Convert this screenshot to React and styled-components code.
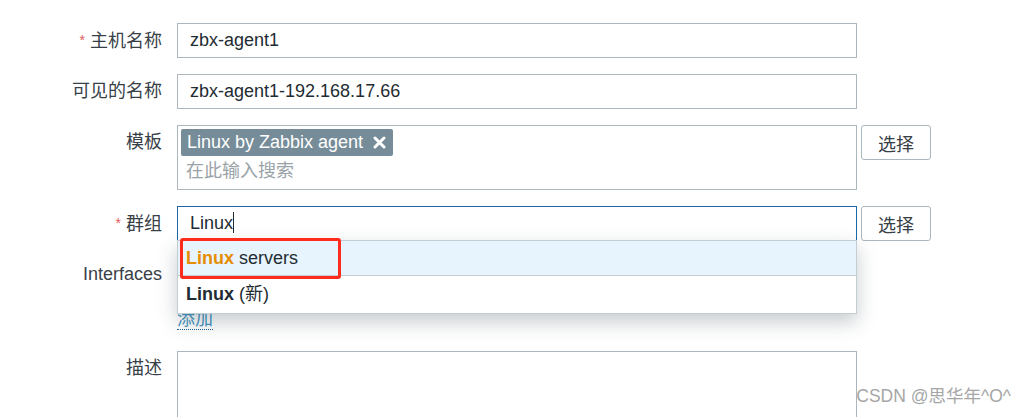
import React from 'react';
import styled, { createGlobalStyle } from 'styled-components';

const GlobalStyle = createGlobalStyle`
    body {
        margin: 0;
        background: #fff;
        font-family: "Liberation Sans", Arial, "Noto Sans CJK SC", sans-serif;
        color: #1f2c33;
    }
`;

const StPage = styled.div`
    position: relative;
    width: 1024px;
    height: 417px;
    overflow: hidden;
    padding-top: 23px;
    box-sizing: border-box;
`;

const StForm = styled.div`
    display: flex;
    flex-direction: column;
    gap: 16px;
`;

const StRow = styled.div`
    display: flex;
    align-items: flex-start;
    margin-top: ${p => p.top || 0}px;
`;

const StLabel = styled.div`
    width: 162px;
    padding-right: 15px;
    height: 35px;
    line-height: 35px;
    text-align: right;
    font-size: 18px;
    color: #384047;
    flex-shrink: 0;
    white-space: nowrap;
`;

const StRequired = styled.span`
    color: #e45959;
    font-size: 14px;
    margin-right: 5px;
    vertical-align: 2px;
`;

const StField = styled.div`
    position: relative;
    width: 680px;
    flex-shrink: 0;
`;

const StInput = styled.div`
    box-sizing: border-box;
    height: 35px;
    border: 1px solid ${p => (p.focused ? '#1d66a8' : '#acb6bd')};
    padding: 0 12px;
    line-height: 33px;
    font-size: 18px;
    color: #1f2c33;
`;

const StCaret = styled.span`
    display: inline-block;
    width: 1px;
    height: 21px;
    background: #1f2c33;
    vertical-align: -4px;
`;

const StMulti = styled.div`
    box-sizing: border-box;
    height: 65px;
    border: 1px solid #acb6bd;
    padding: 3px 3px 0 3px;
`;

const StTag = styled.span`
    display: inline-flex;
    align-items: center;
    height: 27px;
    padding: 0 7px 0 6px;
    background: #768d99;
    border-radius: 2px;
    color: #fff;
    font-size: 18px;
    gap: 10px;
`;

const StPlaceholder = styled.div`
    padding-left: 5px;
    margin-top: 3px;
    font-size: 18px;
    color: #9aa3a8;
    line-height: 24px;
`;

const StButton = styled.button`
    box-sizing: border-box;
    margin-left: 4px;
    width: 70px;
    height: 35px;
    border: 1px solid #acb6bd;
    border-radius: 3px;
    background: #fff;
    font-family: inherit;
    font-size: 18px;
    color: #384047;
    padding: 0;
`;

const StLink = styled.span`
    display: inline-block;
    margin-top: 53px;
    font-size: 18px;
    color: #4796c4;
    border-bottom: 1px dotted #1d66a8;
    line-height: 19px;
`;

const StTextarea = styled.div`
    box-sizing: border-box;
    height: 80px;
    border: 1px solid #acb6bd;
`;

const StDropdown = styled.div`
    position: absolute;
    top: 34px;
    left: 0;
    width: 680px;
    box-sizing: border-box;
    border: 1px solid #c4cdd2;
    background: #fff;
    box-shadow: 0 8px 18px rgba(30, 50, 60, 0.25);
    z-index: 5;
`;

const StOption = styled.div`
    height: ${p => p.h}px;
    line-height: ${p => p.h}px;
    padding-left: 8px;
    font-size: 18px;
    color: #1f2c33;
    background: ${p => (p.active ? '#e8f4fd' : '#fff')};
    border-bottom: ${p => (p.active ? '1px solid #c4cdd2' : 'none')};

    b {
        color: ${p => (p.active ? '#e68c00' : '#1f2c33')};
    }
`;

const StMark = styled.div`
    position: absolute;
    left: 2px;
    top: -3px;
    width: 161px;
    height: 41px;
    box-sizing: border-box;
    border: 3px solid #ff2b1c;
    border-radius: 3px;
`;

const StWatermark = styled.div`
    position: absolute;
    right: 13px;
    bottom: 10px;
    font-size: 17.5px;
    color: #a6a6a6;
    font-family: "Liberation Sans", "Noto Sans CJK SC", sans-serif;
`;

const CloseIcon = () => (
    <svg width="13" height="13" viewBox="0 0 13 13">
        <path d="M2 2 L11 11 M11 2 L2 11" stroke="#fff" strokeWidth="3" strokeLinecap="round" />
    </svg>
);

const App = () => (
    <StPage>
        <GlobalStyle />
        <StForm>
            <StRow>
                <StLabel><StRequired>*</StRequired>主机名称</StLabel>
                <StField><StInput>zbx-agent1</StInput></StField>
            </StRow>
            <StRow>
                <StLabel>可见的名称</StLabel>
                <StField><StInput>zbx-agent1-192.168.17.66</StInput></StField>
            </StRow>
            <StRow>
                <StLabel>模板</StLabel>
                <StField>
                    <StMulti>
                        <StTag>Linux by Zabbix agent <CloseIcon /></StTag>
                        <StPlaceholder>在此输入搜索</StPlaceholder>
                    </StMulti>
                </StField>
                <StButton>选择</StButton>
            </StRow>
            <StRow>
                <StLabel><StRequired>*</StRequired>群组</StLabel>
                <StField>
                    <StInput focused>Linux<StCaret /></StInput>
                    <StDropdown>
                        <StOption active h={34}><b>Linux</b> servers</StOption>
                        <StOption h={37}><b>Linux</b> (新)</StOption>
                        <StMark />
                    </StDropdown>
                </StField>
                <StButton>选择</StButton>
            </StRow>
            <StRow>
                <StLabel>Interfaces</StLabel>
                <StField><StLink>添加</StLink></StField>
            </StRow>
            <StRow top={5}>
                <StLabel>描述</StLabel>
                <StField><StTextarea /></StField>
            </StRow>
        </StForm>
        <StWatermark>CSDN @思华年^O^</StWatermark>
    </StPage>
);

export default App;
